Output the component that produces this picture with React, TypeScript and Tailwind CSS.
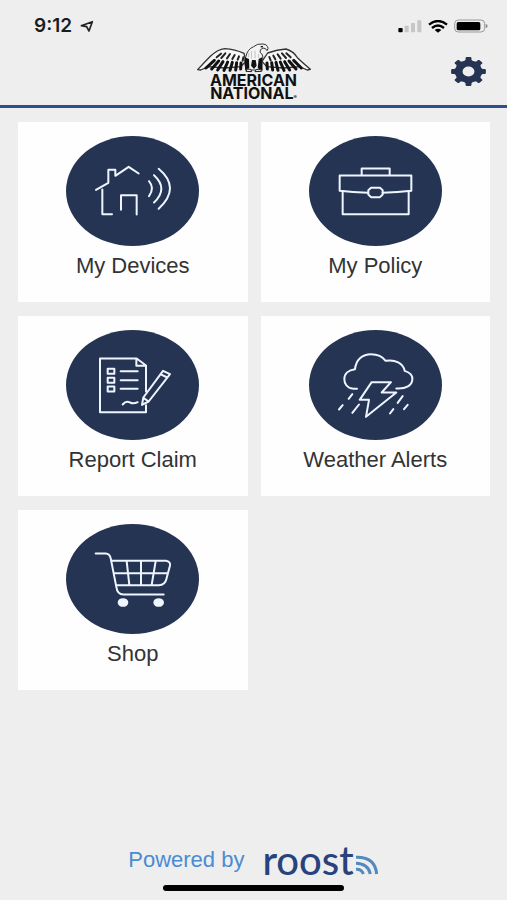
import type { ReactNode } from "react";

const gearPath = (() => {
  const points: string[] = [];
  const profile: [number, number][] = [
    [-17, 39],
    [-12, 41],
    [-10, 48],
    [-7, 50],
    [7, 50],
    [10, 48],
    [12, 41],
    [17, 39],
  ];
  for (let tooth = 0; tooth < 8; tooth++) {
    for (const [offset, radius] of profile) {
      const angle = ((tooth * 45 + offset) * Math.PI) / 180;
      points.push(
        `${(50 + radius * Math.sin(angle)).toFixed(2)} ${(50 - radius * Math.cos(angle)).toFixed(2)}`,
      );
    }
  }
  return `M${points.join("L")}ZM50 33a17 17 0 1 0 0 34a17 17 0 1 0 0-34Z`;
})();

function StatusBar() {
  return (
    <div className="flex h-10 items-center justify-between pt-3 pr-[19px] pl-[34px]">
      <div className="flex items-center gap-2">
        <span className="font-['Inter','Liberation_Sans',sans-serif] text-[19px] leading-7 font-semibold text-[#1c1c1c]">
          9:12
        </span>
        <svg className="h-[13px] w-[14px]" viewBox="0 0 42 39" aria-hidden="true">
          <path
            d="M4 17L37 5L27 33L20 20Z"
            fill="none"
            stroke="#222"
            strokeWidth="5"
            strokeLinejoin="round"
          />
        </svg>
      </div>
      <div className="flex items-center gap-[6px]">
        <svg className="h-[13px] w-6" viewBox="0 0 72 39" aria-hidden="true">
          <rect x="1" y="24" width="13" height="13" rx="3" fill="#000" />
          <rect x="20" y="17" width="12" height="20" rx="2" fill="#c6c6c6" />
          <rect x="39" y="9" width="12" height="28" rx="2" fill="#c6c6c6" />
          <rect x="58" y="1" width="12" height="36" rx="2" fill="#c6c6c6" />
        </svg>
        <svg className="h-[13px] w-5" viewBox="0 0 60 39" aria-hidden="true">
          <path d="M3 14Q30-8 57 14" fill="none" stroke="#000" strokeWidth="7" />
          <path d="M12 24Q30 9 48 24" fill="none" stroke="#000" strokeWidth="7" />
          <path d="M20 30Q30 22 40 30L30 38Z" fill="#000" />
        </svg>
        <svg className="h-[14px] w-[34px]" viewBox="0 0 102 42" aria-hidden="true">
          <rect x="2" y="3" width="90" height="36" rx="11" fill="none" stroke="#999" strokeWidth="3" />
          <rect x="8" y="9" width="71" height="25" rx="5" fill="#000" />
          <path d="M95 15Q101 17 101 21T95 28Z" fill="#888" />
        </svg>
      </div>
    </div>
  );
}

function Eagle() {
  return (
    <svg className="h-[30px] w-[114px]" viewBox="37 23 342 90" aria-hidden="true">
      <g fill="#f6f6f6" stroke="#333" strokeWidth="4" strokeLinejoin="round">
        <path d="M39 103Q58 82 78 62Q100 42 120 40Q151 42 178 54L184 78L168 94L120 98L72 94L48 104Z" />
        <path d="M377 102Q358 86 339 68Q327 48 304 41Q278 43 249 53L232 78L246 94L296 98L344 94L368 104Z" />
      </g>
      <g stroke="#111" strokeWidth="9" strokeLinecap="round">
        <path d="M89 75L64 98M102 77L81 101M115 79L99 104M129 80L118 105M143 81L136 105M156 82L153 104M169 83L168 101" />
        <path d="M327 75L350 98M313 77L334 101M300 79L315 104M287 80L298 105M274 81L280 105M261 82L264 104M247 83L248 101" />
      </g>
      <g stroke="#222" strokeWidth="6" strokeLinecap="round">
        <path d="M109 55L96 66M122 54L110 68M136 56L127 69M150 59L143 71M163 63L159 73M176 66L174 76" />
        <path d="M305 54L318 66M292 54L304 68M279 57L288 70M266 61L272 72M254 65L258 75" />
      </g>
      <path
        d="M184 63Q188 42 207 34Q217 24 235 26Q246 27 248 33Q253 38 247 46Q244 38 235 38Q224 42 226 51Q239 58 232 82L230 104L184 104L179 78Z"
        fill="#f4f4f4"
        stroke="#333"
        strokeWidth="3"
        strokeLinejoin="round"
      />
      <path d="M180 66L193 71L194 99L182 106ZM232 66L222 71L219 99L234 106ZM202 74L213 74L216 91L208 101L199 91Z" fill="#111" />
      <path d="M193 53L191 66M201 47L200 70M211 46L211 69M222 56L222 68" stroke="#aaa" strokeWidth="2" />
      <path d="M228 34L235 34" stroke="#111" strokeWidth="4" />
      <g fill="#eee" stroke="#222" strokeWidth="3">
        <path d="M184 108Q186 97 194 102Q199 98 201 109Z" />
        <path d="M211 109Q214 98 221 103Q228 98 231 108Z" />
      </g>
    </svg>
  );
}

function Header() {
  return (
    <header className="border-b-[3px] border-[#2f4f8c]">
      <StatusBar />
      <div className="grid h-[65px] grid-cols-[1fr_auto_1fr] items-start px-[21px]">
        <div className="col-start-2 flex flex-col items-center pt-[3px]">
          <Eagle />
          <h1 className="mt-px text-center font-['Inter','Liberation_Sans',sans-serif] text-[16px] leading-[13px] font-bold text-[#111]">
            AMERICAN
            <br />
            NATIONAL<span className="text-[5px] leading-none">®</span>
          </h1>
        </div>
        <button type="button" aria-label="Settings" className="mt-[17px] justify-self-end">
          <svg className="block h-[29px] w-[35px]" viewBox="0 0 100 100" preserveAspectRatio="none">
            <path d={gearPath} fill="#263454" fillRule="evenodd" />
          </svg>
        </button>
      </div>
    </header>
  );
}

function Tile({ label, viewBox, children }: { label: string; viewBox: string; children: ReactNode }) {
  return (
    <button type="button" className="flex h-[180px] flex-col items-center bg-[#fefefe] pt-[14px]">
      <span className="flex h-[110px] w-[133px] rounded-[50%] bg-[#263454]">
        <svg
          className="h-full w-full"
          viewBox={viewBox}
          fill="none"
          stroke="#eff5ff"
          strokeWidth="6"
          strokeLinecap="round"
          strokeLinejoin="round"
          aria-hidden="true"
        >
          {children}
        </svg>
      </span>
      <span className="mt-[6px] text-[22px] leading-7 text-[#333]">{label}</span>
    </button>
  );
}

function RoostLogo() {
  return (
    <span className="flex items-end gap-px text-[#27427c]">
      <span className="font-['Lato','Liberation_Sans',sans-serif] text-[40px] leading-9 font-medium">roost</span>
      <svg className="mb-[3px] h-5 w-6" viewBox="0 0 72 60" fill="none" stroke="#5489bd" strokeWidth="9" aria-hidden="true">
        <path d="M3 7Q60 5 65 57" />
        <path d="M3 25Q39 26 46 57" />
        <path d="M3 43Q20 42 25 57" />
      </svg>
    </span>
  );
}

export default function App() {
  return (
    <div className="flex min-h-screen flex-col bg-[#eee] font-['Liberation_Sans',Arial,sans-serif]">
      <Header />
      <main className="grid grid-cols-2 gap-x-[13px] gap-y-[14px] pt-[14px] pr-[17px] pl-[18px]">
        <Tile label="My Devices" viewBox="167 63 399 329">
          <path d="M257 224L294 203V164H315V182L355 155L385 175" />
          <path d="M276 223V297H305M332 284V240H379V298" />
          <path d="M416 198Q434 219 416 243M431 180Q475 220 431 262M445 161Q513 218 445 281" />
        </Tile>
        <Tile label="My Policy" viewBox="161 63 399 329">
          <path d="M319 180V160H403V180M253 181H468V227Q428 232 382 233M253 181V227Q291 232 338 233" />
          <path d="M262 230V297H460V230" />
          <path d="M347 218H374L382 225V238L374 246H347L339 238V225Z" />
        </Tile>
        <Tile label="Report Claim" viewBox="167 59 399 329">
          <path d="M407 243V165L379 144H269V305H407V284M378 145V166H406" />
          <path d="M292 175H312V190H292ZM292 202H312V217H292ZM292 228H312V243H292Z" />
          <path d="M331 182H382M331 209H382M331 235H382" />
          <path d="M337 282Q348 269 359 276Q369 281 382 275" />
          <path d="M458 181L479 191L415 273L395 283L399 261ZM450 191L471 201M399 262L415 273" />
        </Tile>
        <Tile label="Weather Alerts" viewBox="161 59 399 329">
          <path d="M305 235H294C274 233 267 218 267 206C267 190 279 178 299 176C302 146 322 131 347 131C369 131 383 140 391 151C419 146 444 158 448 181C467 187 472 197 471 207C470 224 453 236 423 234" />
          <path d="M349 215H407L379 246H423L332 319L341 268H313Z" />
          <path d="M291 251L280 265M262 284L251 297M311 282L291 307M442 257L427 277M457 283L446 296M414 296L404 309" />
        </Tile>
        <Tile label="Shop" viewBox="167 56 399 329">
          <path d="M256 144H286Q298 145 301 158L318 244Q321 267 339 267H460" />
          <path d="M304 166H467Q481 168 479 180L468 221Q464 238 446 239H318M311 203H472" />
          <path d="M349 167L357 238M392 167V238M436 167L424 238" />
          <ellipse cx="338" cy="291" rx="13" ry="10" fill="#eff5ff" />
          <ellipse cx="445" cy="291" rx="13" ry="10" fill="#eff5ff" />
        </Tile>
      </main>
      <footer className="mt-auto flex flex-col items-center pt-6 pb-[9px]">
        <div className="flex items-center gap-[18px]">
          <span className="text-[22px] leading-7 text-[#4b8bd3]">Powered by</span>
          <RoostLogo />
        </div>
        <div className="mt-[7px] h-[6px] w-[181px] rounded-full bg-black" />
      </footer>
    </div>
  );
}
